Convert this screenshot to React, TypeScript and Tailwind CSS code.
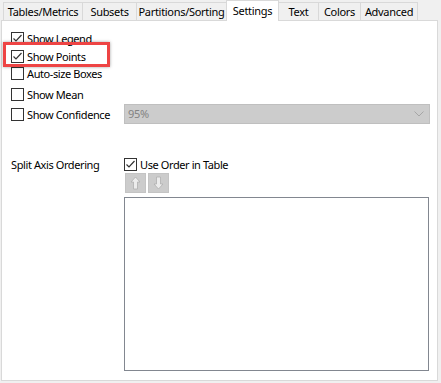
import React from 'react';

const font = { fontFamily: '"Noto Sans", "Open Sans", Arial, sans-serif' };

const tabs = [
  { label: 'Tables/Metrics', w: 'w-[80px]' },
  { label: 'Subsets', w: 'w-[55px]' },
  { label: 'Partitions/Sorting', w: 'w-[91px]' },
  { label: 'Settings', w: 'w-[53px]' },
  { label: 'Text', w: 'w-[41px]' },
  { label: 'Colors', w: 'w-[43px]' },
  { label: 'Advanced', w: 'w-[58px]' },
];

const CheckBox: React.FC<{ checked?: boolean; label: string }> = ({ checked, label }) => (
  <div className="flex items-center h-[13px]">
    <div className="w-[13px] h-[13px] border border-[#333333] bg-white flex items-center justify-center shrink-0">
      {checked && (
        <svg width="11" height="11" viewBox="0 0 11 11">
          <polyline points="1.5,5.5 4,8 9.5,2" fill="none" stroke="#333333" strokeWidth="1.2" />
        </svg>
      )}
    </div>
    <span className="ml-[3px] text-[11px] tracking-[-0.4px] leading-none text-black whitespace-nowrap">{label}</span>
  </div>
);

const ArrowButton: React.FC<{ up?: boolean }> = ({ up }) => (
  <div className="w-[21px] h-[20px] bg-[#cccccc] border border-[#c4c4c4] flex items-center justify-center">
    <svg width="11" height="14" viewBox="0 0 11 14" className={up ? '' : 'rotate-180'}>
      <path d="M5.5 1 L10 6 L7.5 6 L7.5 13 L3.5 13 L3.5 6 L1 6 Z" fill="#ececec" stroke="#b0b0b0" strokeWidth="0.8" />
    </svg>
  </div>
);

export default function App() {
  return (
    <div className="w-[441px] h-[383px] bg-[#f0f0f0] relative overflow-hidden" style={font}>
      <div className="flex items-end h-[20px] pl-[3px]">
        {tabs.map((t, i) =>
          t.label === 'Settings' ? (
            <div
              key={t.label}
              className={`${t.w} relative z-10 h-[21px] -mb-px -ml-px bg-white border border-b-0 border-[#d9d9d9] text-[11px] tracking-[-0.3px] text-black flex justify-center pt-[2px]`}
            >
              {t.label}
            </div>
          ) : (
            <div
              key={t.label}
              className={`${t.w} h-[18px] bg-[#f0f0f0] border border-b-0 border-[#d9d9d9] ${i === 0 ? '' : '-ml-px'} text-[11px] tracking-[-0.3px] text-black flex items-center justify-center pt-[2px]`}
            >
              {t.label}
            </div>
          )
        )}
      </div>

      <div className="ml-[1px] w-[437px] h-[361px] bg-white border border-[#d9d9d9] flex flex-col pl-[9px] pr-[7px]">
        <div className="mt-[11px]">
          <CheckBox checked label="Show Legend" />
        </div>
        <div className="mt-[5px]">
          <CheckBox checked label="Show Points" />
        </div>
        <div className="mt-[4px]">
          <CheckBox label="Auto-size Boxes" />
        </div>
        <div className="mt-[8px]">
          <CheckBox label="Show Mean" />
        </div>
        <div className="mt-[3px] flex items-center h-[20px]">
          <div className="w-[113px]">
            <CheckBox label="Show Confidence" />
          </div>
          <div className="flex-1 h-[20px] bg-[#cccccc] border border-[#bfbfbf] flex items-center justify-between pl-[3px] pr-[5px]">
            <span className="text-[11px] tracking-[-0.3px] text-[#838383]">95%</span>
            <svg width="10" height="6" viewBox="0 0 10 6">
              <polyline points="0.5,0.5 5,5 9.5,0.5" fill="none" stroke="#a6a6a6" strokeWidth="1" />
            </svg>
          </div>
        </div>

        <div className="mt-[34px] flex">
          <div className="w-[113px] text-[11px] tracking-[-0.4px] text-black leading-none pt-[1px]">Split Axis Ordering</div>
          <div className="flex-1 flex flex-col">
            <CheckBox checked label="Use Order in Table" />
            <div className="mt-[2px] flex gap-[2px] pl-[1px]">
              <ArrowButton up />
              <ArrowButton />
            </div>
            <div className="mt-[4px] h-[174px] mr-[1px] bg-white border border-[#828790]" />
          </div>
        </div>
      </div>

      <div className="absolute left-[3px] top-[42px] w-[107px] h-[25px] border-[3px] border-[#ee4444] shadow-[0_0_3px_rgba(0,0,0,0.35)]" />
    </div>
  );
}
